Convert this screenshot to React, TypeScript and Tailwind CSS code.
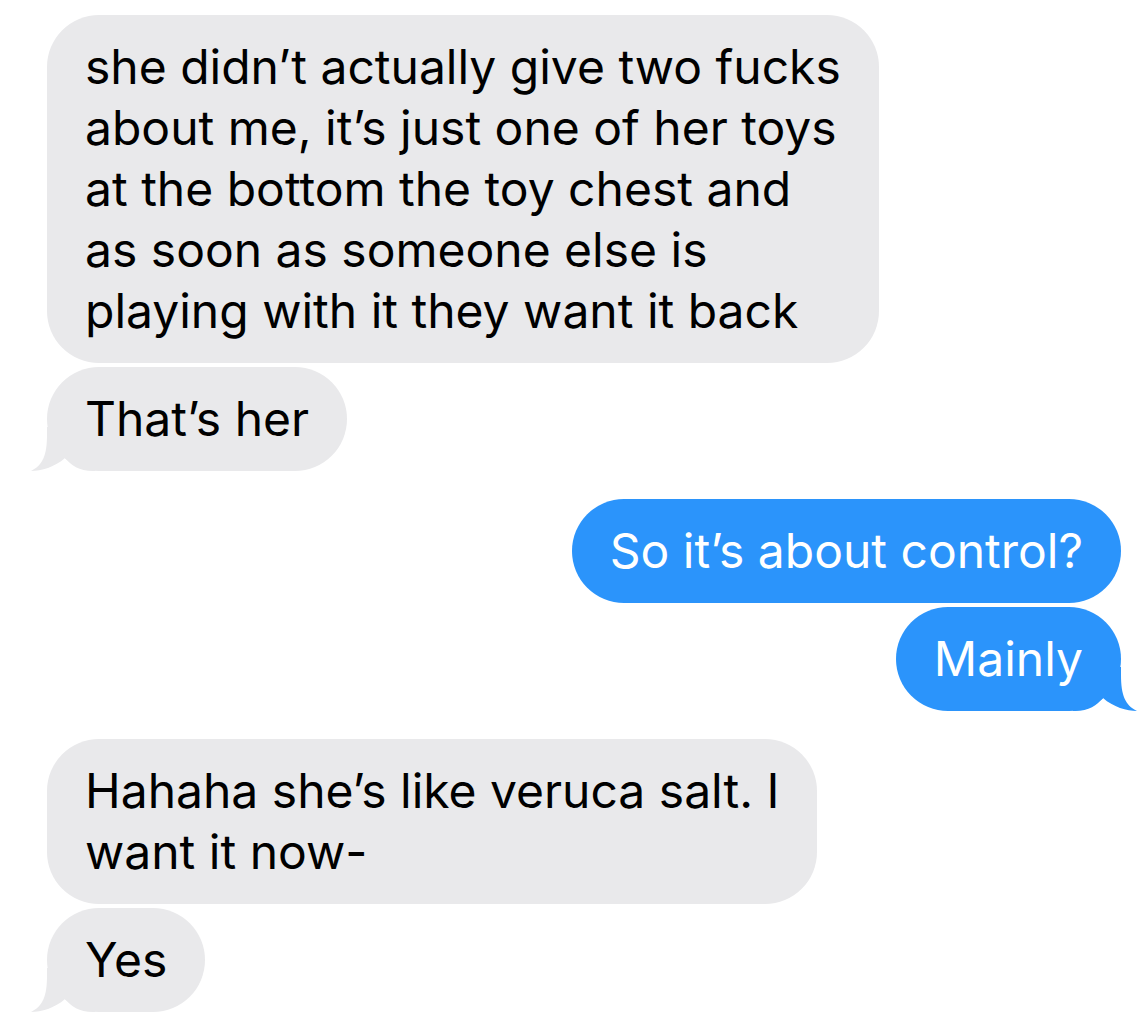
import type { ReactNode } from "react";

type Side = "in" | "out";

const Tail = ({ side }: { side: Side }) => (
  <svg
    width="64"
    height="44"
    viewBox="0 0 64 44"
    className={
      side === "in"
        ? "absolute bottom-0 left-[-16px]"
        : "absolute bottom-0 right-[-16px] -scale-x-100"
    }
  >
    <path
      d="M16 0 L16 8 C16 28 12 38 0 44 C10 44 24 40 34 31 C40 38 48 44 62 44 L64 44 L64 0 Z"
      fill={side === "in" ? "#e9e9eb" : "#2b94fb"}
    />
  </svg>
);

const Bubble = ({
  side,
  tail,
  children,
}: {
  side: Side;
  tail?: boolean;
  children: ReactNode;
}) => (
  <div className={side === "in" ? "flex justify-start" : "flex justify-end"}>
    <div
      className={`relative rounded-[52px] px-[38px] pt-[21px] pb-[22px] text-[48px] leading-[61px] ${
        side === "in" ? "bg-[#e9e9eb] text-black" : "bg-[#2b94fb] text-white"
      }`}
    >
      {tail && <Tail side={side} />}
      <span className="relative whitespace-nowrap">{children}</span>
    </div>
  </div>
);

export default function App() {
  return (
    <div
      className="min-h-screen bg-white pl-[47px] pr-[20px] pt-[15px]"
      style={{ fontFamily: "Inter, 'Liberation Sans', sans-serif" }}
    >
      <div className="flex flex-col gap-[4px]">
        <Bubble side="in">
          she didn’t actually give two fucks
          <br />
          about me, it’s just one of her toys
          <br />
          at the bottom the toy chest and
          <br />
          as soon as someone else is
          <br />
          playing with it they want it back
        </Bubble>
        <Bubble side="in" tail>
          That’s her
        </Bubble>
      </div>

      <div className="mt-[28px] flex flex-col gap-[4px]">
        <Bubble side="out">So it’s about control?</Bubble>
        <Bubble side="out" tail>
          Mainly
        </Bubble>
      </div>

      <div className="mt-[28px] flex flex-col gap-[4px]">
        <Bubble side="in">
          Hahaha she’s like veruca salt. I
          <br />
          want it now-
        </Bubble>
        <Bubble side="in" tail>
          Yes
        </Bubble>
      </div>
    </div>
  );
}
